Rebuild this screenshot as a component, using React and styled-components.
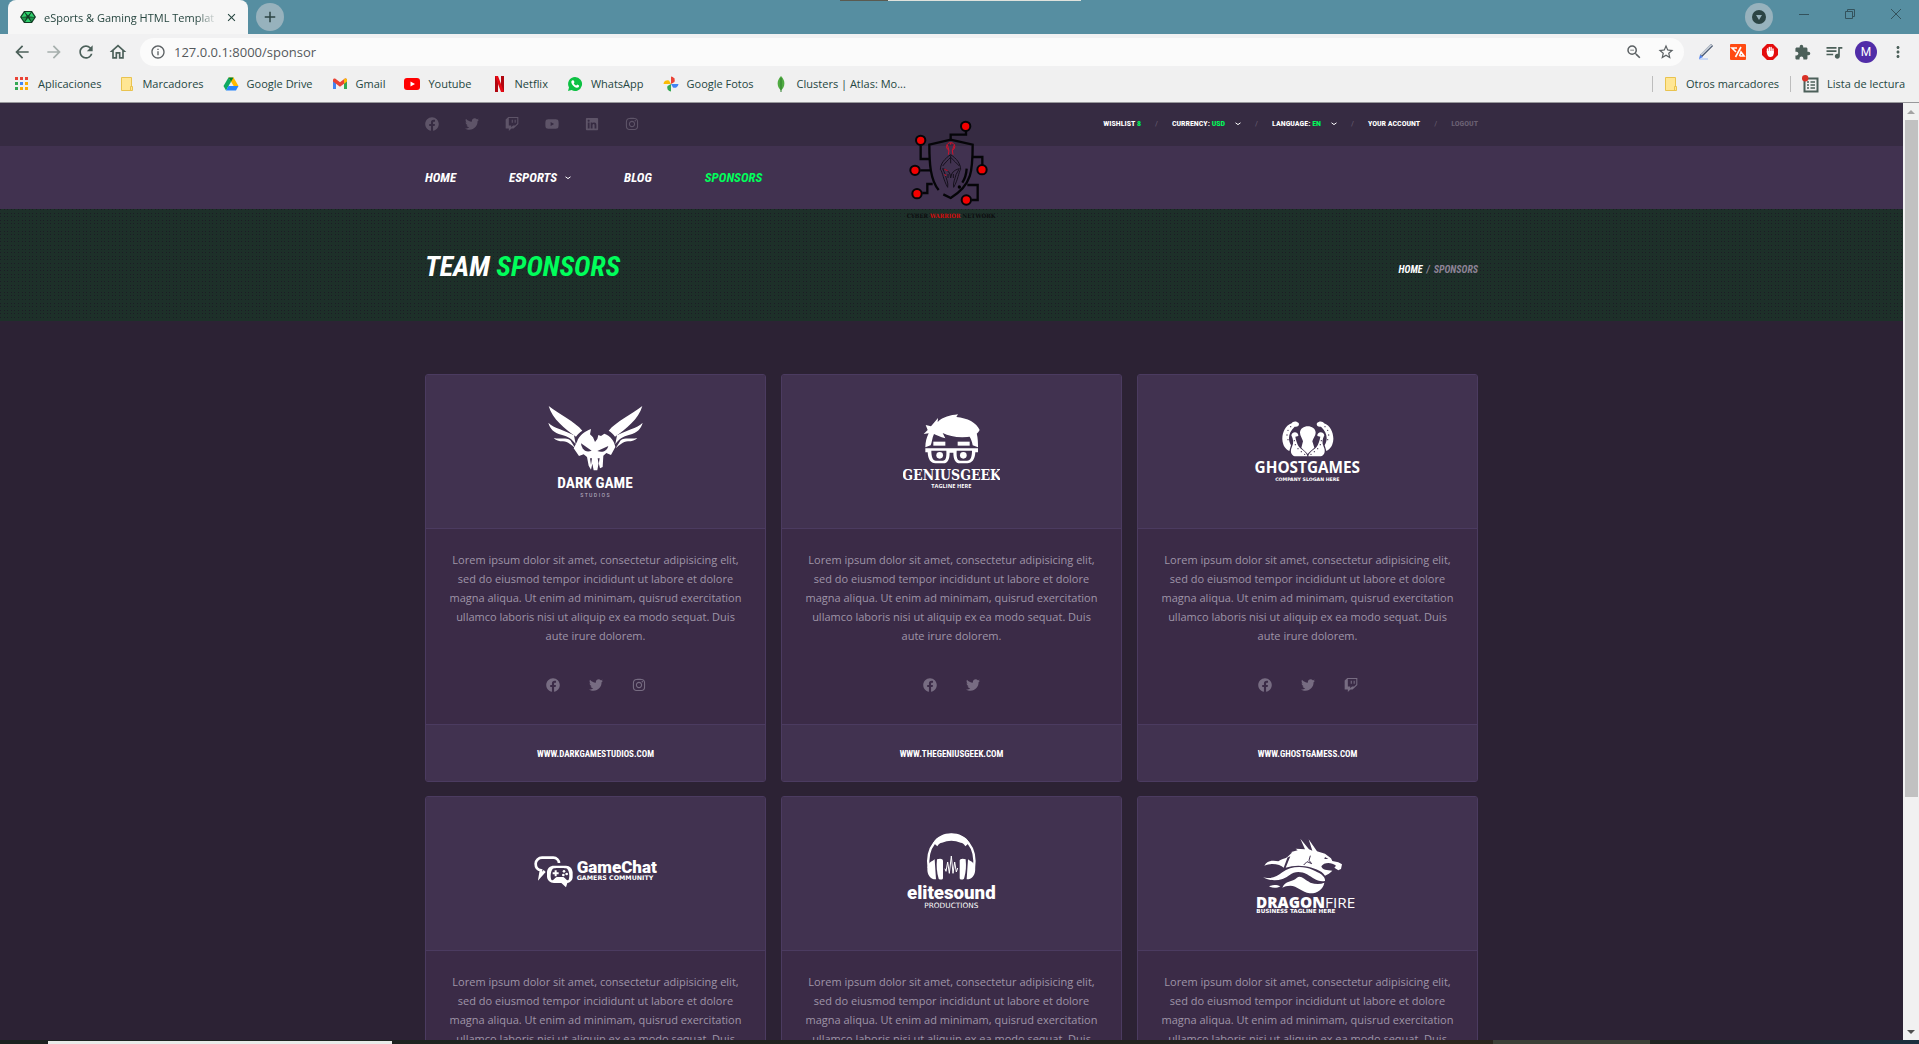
import React from 'react';
import styled, { createGlobalStyle } from 'styled-components';
import { FaFacebook, FaTwitter, FaTwitch, FaYoutube, FaLinkedin, FaInstagram } from 'react-icons/fa';
import { MdArrowBack, MdArrowForward, MdRefresh, MdOutlineHome, MdInfoOutline, MdZoomOut, MdStarBorder, MdExtension, MdQueueMusic, MdMoreVert, MdAdd, MdClose } from 'react-icons/md';

const condensed = '"Roboto Condensed", "Liberation Sans Narrow", Roboto, sans-serif';
const ui = '"Open Sans", "Noto Sans", sans-serif';

const GlobalStyle = createGlobalStyle`
  * { box-sizing: border-box; }
  body { margin: 0; background: #2c2234; font-family: ${ui}; }
  a { color: inherit; text-decoration: none; }
  button { border: 0; padding: 0; background: none; color: inherit; font: inherit; }
  svg { display: block; flex: none; }
`;

/* ---------- browser window ---------- */

const Window = styled.div`
  display: flex;
  flex-direction: column;
  height: 100vh;
  overflow: hidden;
`;

const TabStrip = styled.header`
  display: flex;
  align-items: center;
  height: 34px;
  flex: none;
  padding-left: 8px;
  background: linear-gradient(90deg, transparent 840px, #5a5a50 840px 888px, #dfe2dc 888px 1081px, transparent 1081px) top / 100% 1px no-repeat, #568ea1;
`;

const Tab = styled.div`
  display: flex;
  align-items: center;
  gap: 8px;
  width: 240px;
  height: 34px;
  padding: 0 10px 0 12px;
  border-radius: 8px 8px 0 0;
  background: #f6f6f6;
  color: #274640;
`;

const TabTitle = styled.span`
  flex: 1;
  overflow: hidden;
  white-space: nowrap;
  font-size: 11px;
  mask-image: linear-gradient(90deg, #000 88%, transparent);
`;

const RoundButton = styled.button`
  display: grid;
  place-items: center;
  width: 28px;
  height: 28px;
  margin: 0 8px;
  border-radius: 50%;
  background: #97b2bd;
  color: #2c4444;
`;

const WindowControls = styled.div`
  display: flex;
  align-items: center;
  margin-left: auto;
  color: #33525c;
`;

const WindowButton = styled.button`
  display: grid;
  place-items: center;
  width: 46px;
  height: 28px;
  padding-bottom: 6px;
`;

const Toolbar = styled.nav`
  display: flex;
  align-items: center;
  flex: none;
  height: 36px;
  padding: 4px 5px 4px 6px;
  background: #f1f1f2;
  color: #4c605a;
`;

const ToolButton = styled.button`
  display: grid;
  place-items: center;
  width: 32px;
  height: 28px;
  opacity: ${(p) => (p.$dim ? 0.45 : 1)};
`;

const AddressBar = styled.label`
  display: flex;
  align-items: center;
  flex: 1;
  height: 28px;
  margin: 0 6px;
  padding: 0 2px 0 10px;
  border-radius: 14px;
  background: #fbfbfb;
  color: #5b6063;
`;

const AddressInput = styled.input`
  flex: 1;
  min-width: 0;
  border: 0;
  padding: 0 8px;
  outline: 0;
  background: none;
  color: #54595c;
  font: 13px/20px ${ui};
`;

const Avatar = styled.span`
  display: grid;
  place-items: center;
  width: 22px;
  height: 22px;
  border-radius: 50%;
  background: #512da8;
  color: #fff;
  font: 12px Roboto, sans-serif;
`;

const Bookmarks = styled.nav`
  display: flex;
  align-items: center;
  justify-content: space-between;
  flex: none;
  height: 33px;
  padding: 0 14px 5px;
  border-bottom: 1px solid #98989b;
  background: #f0f0f0;
  color: #24463f;
  font-size: 11px;
`;

const BookmarkGroup = styled.div`
  display: flex;
  align-items: center;
  gap: ${(p) => p.$gap}px;
`;

const Bookmark = styled.a`
  display: flex;
  align-items: center;
  gap: 8px;
  white-space: nowrap;
`;

const Divider = styled.i`
  width: 1px;
  height: 16px;
  background: #bdbdbd;
`;

const Viewport = styled.div`
  display: flex;
  flex: 1;
  min-height: 0;
`;

const Page = styled.div`
  flex: 1;
  min-width: 0;
  overflow: hidden;
  background: #2c2234;
`;

const ScrollBar = styled.div`
  display: flex;
  flex-direction: column;
  flex: none;
  width: 16px;
  background: #f1f1f1;
`;

const ScrollArrow = styled.button`
  display: grid;
  place-items: center;
  height: 17px;
  color: ${(p) => (p.$dim ? '#a3a3a3' : '#505050')};
`;

const ScrollTrack = styled.div`
  flex: 1;
  padding: 0 1px 0 2px;
`;

const ScrollThumb = styled.div`
  height: 75%;
  background: #c1c1c1;
`;

const DesktopEdge = styled.div`
  flex: none;
  height: 4px;
  background:
    linear-gradient(90deg, transparent 48px, #e9ebe9 48px 392px, transparent 392px) bottom / 100% 3px no-repeat,
    linear-gradient(90deg, transparent 1493px, #3c4037 1493px 1650px, transparent 1650px),
    linear-gradient(90deg, #1b2220, #22231f 60%, #2c251c 75%, #1f2423 88%, #1b2f3f);
`;

/* ---------- site header ---------- */

const Container = styled.div`
  display: flex;
  align-items: center;
  width: 100%;
  max-width: 1053px;
  height: 100%;
  margin: 0 auto;
`;

const TopBar = styled.div`
  height: 43px;
  padding-bottom: 2px;
  background: #362b42;
`;

const Socials = styled.div`
  display: flex;
  align-items: center;
  gap: ${(p) => p.$gap}px;
  color: ${(p) => p.$color};
`;

const AccountMenu = styled.ul`
  display: flex;
  align-items: center;
  margin: 0 0 0 auto;
  padding: 0;
  list-style: none;
  color: #fff;
  font: 700 8px/12px ${condensed};

  li + li::before {
    content: '/';
    margin: 0 14px;
    color: #6a6073;
    font-weight: 400;
  }
`;

const MenuItem = styled.li`
  display: flex;
  align-items: center;
  color: ${(p) => (p.$muted ? '#6a6073' : '#fff')};
`;

const MenuButton = styled.button`
  display: flex;
  align-items: center;
  gap: 10px;
`;

const Accent = styled.span`
  color: #00ff5b;
`;

const Header = styled.header`
  position: relative;
`;

const MainNav = styled.nav`
  height: 63px;
  background: #413250;
`;

const NavList = styled.ul`
  display: flex;
  gap: 53px;
  margin: 0;
  padding: 0;
  list-style: none;
  color: #fff;
  font: italic 700 13px/16px ${condensed};
`;

const NavLink = styled.a`
  display: flex;
  align-items: center;
  gap: 8px;
  color: ${(p) => (p.$active ? '#00ff5b' : '#fff')};
`;

const BrandLink = styled.a`
  position: absolute;
  top: 17px;
  left: 50%;
  transform: translateX(-50%);
`;

const Banner = styled.section`
  height: 112px;
  padding-top: 3px;
  background:
    repeating-linear-gradient(180deg, transparent 0 1px, #1d3029 1px 4px, transparent 4px 5px, #1d3029 5px 7px, transparent 7px 8px, #1d3029 8px 11px, transparent 11px 12px, #1d3029 12px 14px, transparent 14px 15px, #1d3029 15px 18px),
    repeating-linear-gradient(90deg, transparent 0 1px, #1d3029 1px 4px, transparent 4px 5px, #1d3029 5px 7px, transparent 7px 8px, #1d3029 8px 11px, transparent 11px 12px, #1d3029 12px 14px, transparent 14px 15px, #1d3029 15px 18px),
    #1c1c25;
`;

const Title = styled.h1`
  margin: 0;
  color: #fff;
  font: italic 700 28px/36px ${condensed};
`;

const Crumbs = styled.nav`
  display: flex;
  gap: 4px;
  margin-left: auto;
  padding-top: 6px;
  color: #8d8396;
  font: italic 700 10px/12px ${condensed};
`;

const CrumbLink = styled.a`
  color: #fff;
`;

/* ---------- sponsors ---------- */

const Grid = styled.main`
  display: grid;
  grid-template-columns: repeat(3, 1fr);
  gap: 14px 15px;
  max-width: 1053px;
  margin: 0 auto;
  padding: 53px 0;
`;

const Card = styled.article`
  overflow: hidden;
  border: 1px solid #4b3b60;
  border-radius: 3px;
  background: #3b2b47;
`;

const CardLogo = styled.header`
  display: grid;
  place-items: center;
  height: 154px;
  border-bottom: 1px solid #4b3b60;
  background: #413250;
`;

const CardBody = styled.div`
  display: flex;
  flex-direction: column;
  align-items: center;
  gap: 33px;
  padding: 21px 21px 32px;
`;

const Blurb = styled.p`
  margin: 0;
  color: #9f95a7;
  text-align: center;
  font: 11px/19px "Open Sans", sans-serif;
`;

const CardFooter = styled.footer`
  display: grid;
  place-items: center;
  height: 57px;
  padding-top: 2px;
  border-top: 1px solid #4b3b60;
  background: #413250;
  color: #fff;
  font: 700 9px/12px ${condensed};
`;

/* ---------- drawings ---------- */

const Chevron = () => (
  <svg width="6" height="4" viewBox="0 0 6 4" fill="none" stroke="currentColor">
    <path d="M0.5 0.8L3 2.6L5.5 0.8" />
  </svg>
);

const Favicon = () => (
  <svg width="16" height="16" viewBox="0 0 16 16">
    <path d="M4 2h8l4 6-4 6H4L0 8z" fill="#123c25" />
    <path d="M5 3h6l-3 3.500zM1.500 8L4.500 3.500l2.300 4zM14.500 8l-3-4.500-2.300 4zM5 13L8 9l3 4z" fill="#2fd06c" />
    <path d="M6.500 8.500L4.500 12.500l-3-4zM9.500 8.500l2 4 3-4z" fill="#1f9a4d" />
  </svg>
);

const AppsIcon = () => (
  <svg width="16" height="16" viewBox="0 0 16 16">
    {['#ea4335', '#ea4335', '#ea4335', '#34a853', '#4285f4', '#fbab05', '#34a853', '#fbab05', '#fbab05'].map((c, i) => (
      <rect key={i} x={1 + (i % 3) * 5} y={1 + Math.floor(i / 3) * 5} width="3" height="3" fill={c} />
    ))}
  </svg>
);

const FolderIcon = () => (
  <svg width="14" height="16" viewBox="0 0 14 16">
    <path d="M1.500 1.500h10v9h1v4h-11z" fill="#ffe694" stroke="#e9c34f" />
    <path d="M10.500 14.500v-4h1.500" fill="none" stroke="#e9c34f" />
  </svg>
);

const DriveIcon = () => (
  <svg width="16" height="16" viewBox="0 0 16 16">
    <path d="M5.500 1.500h5L15.500 10h-4.800z" fill="#ffba00" />
    <path d="M5.500 1.500L8 5.800 3 14.500 0.500 10z" fill="#0da960" />
    <path d="M5.400 10h10.100L13 14.500H3z" fill="#2684fc" />
    <path d="M8 1.500h2.500L8 5.800 5.500 1.500z" fill="#00832d" />
  </svg>
);

const GmailIcon = () => (
  <svg width="16" height="16" viewBox="0 0 16 16">
    <path d="M1 4v9h3V7z" fill="#4285f4" />
    <path d="M15 4v9h-3V7z" fill="#34a853" />
    <path d="M1 4c0-1.500 1.500-2 2.500-1.200L8 6.300l4.500-3.500C13.500 2 15 2.500 15 4v1.500L8 10.800 1 5.500z" fill="#ea4335" />
    <path d="M12 3.200c1.200-1.200 3-.6 3 .8v1.500L12 7.800z" fill="#fbbc04" />
  </svg>
);

const YoutubeIcon = () => (
  <svg width="16" height="16" viewBox="0 0 16 16">
    <rect x="0" y="2" width="16" height="12" rx="3" fill="#f00" />
    <path d="M6.500 5.500v5L11 8z" fill="#fff" />
  </svg>
);

const NetflixIcon = () => (
  <svg width="16" height="16" viewBox="0 0 16 16">
    <path d="M4 0h3v16H4zM10 0h3v16h-3z" fill="#b1060f" />
    <path d="M4 0h3l6 16h-3z" fill="#e50914" />
  </svg>
);

const WhatsAppIcon = () => (
  <svg width="16" height="16" viewBox="0 0 16 16">
    <path d="M8 1a7 7 0 1 1-3.400 13.100L1 15l1-3.500A7 7 0 0 1 8 1z" fill="#0dc143" />
    <path d="M5.500 4.200l1.300.2.700 1.800-.8 1c.6 1.200 1.400 1.900 2.600 2.400l.9-1 1.900.9c.1 1.500-1 2.300-2.300 2.200C7 11.200 4.500 8.500 4.300 6c0-.8.5-1.500 1.200-1.800z" fill="#fff" />
  </svg>
);

const PhotosIcon = () => (
  <svg width="16" height="16" viewBox="0 0 16 16">
    <path d="M8 8V0.500a4 4 0 0 1 3.500 5.500L8 8z" fill="#ea4335" />
    <path d="M8 8h7.500a4 4 0 0 1-5.500 3.500z" fill="#4285f4" />
    <path d="M8 8v7.500A4 4 0 0 1 4.500 10z" fill="#34a853" />
    <path d="M8 8H0.500A4 4 0 0 1 6 4.500z" fill="#fbbc04" />
  </svg>
);

const LeafIcon = () => (
  <svg width="16" height="16" viewBox="0 0 16 16">
    <path d="M8 0c5 5 4 11 0 14.500C4 11 3 5 8 0z" fill="#4faa41" />
    <path d="M8 2v14" stroke="#2f7f2d" />
  </svg>
);

const ReadingListIcon = () => (
  <svg width="17" height="18" viewBox="0 0 17 18">
    <path d="M3 3.500h12.500v13H2.500V6" fill="none" stroke="#4c605a" strokeWidth="2" />
    <path d="M5 7h2M8.500 7H13M5 10h2M8.500 10H13M5 13h2M8.500 13H13" stroke="#4c605a" strokeWidth="1.500" />
    <circle cx="3.200" cy="3.200" r="3.200" fill="#d93025" />
  </svg>
);

const PenIcon = () => (
  <svg width="16" height="16" viewBox="0 0 16 16">
    <path d="M1 15h9" stroke="#c9d8f5" strokeWidth="2" />
    <path d="M3 12L14 1" stroke="#3c4c66" strokeWidth="3" />
    <path d="M3 11L13.500 0.800" stroke="#c5ccd6" strokeWidth="2" />
    <path d="M1 15l1-4 3 2z" fill="#4b7ff0" />
  </svg>
);

const OrangeIcon = () => (
  <svg width="16" height="16" viewBox="0 0 16 16">
    <rect width="16" height="16" rx="1" fill="#ff4a12" />
    <path d="M7 4H2l4 4M5.500 13L11 3M9.500 12H14l-3-4L9.500 12" fill="none" stroke="#fff" strokeWidth="1.600" />
  </svg>
);

const BlockIcon = () => (
  <svg width="16" height="16" viewBox="0 0 16 16">
    <path d="M5 0h6l5 5v6l-5 5H5l-5-5V5z" fill="#e40d0d" />
    <path d="M5.500 8V5M7.300 7V3.500M9.100 7V3.500M11 9V5" stroke="#fff" strokeWidth="1.400" strokeLinecap="round" />
    <path d="M4.800 7h6.900v2c0 3-1.500 4-3.500 4S5.500 11.500 4.800 9z" fill="#fff" />
  </svg>
);

const BrandLogo = () => (
  <svg width="92" height="100" viewBox="138 60 276 300">
    <g fill="none" stroke="#050508" strokeWidth="7">
      <path d="M236 270C211 240 208 190 208 134L272 119L338 134C338 210 337 255 272 294L250 283" />
      <path d="M272 119V104H318V90M182 137V177H209M181 211H211M187 279H202V252H218M338 171H367V195M322 255H353V300H335M320 206C319 222 315 236 307 248" />
    </g>
    <circle cx="298" cy="261" r="5" />
    {[[317, 79], [182, 121], [165, 211], [171, 281], [366, 209], [319, 300]].map(([x, y]) => (
      <circle key={x} cx={x} cy={y} r="14" fill="#f40000" stroke="#050508" strokeWidth="6" />
    ))}
    <path d="M265 164L267 152C254 142 260 128 272 128C284 128 290 142 277 152L279 164M267 152L262 134M277 152L283 134M272 129V134" fill="none" stroke="#d3122b" strokeWidth="3" />
    <g fill="none" stroke="#15101c" strokeWidth="3">
      <path d="M272 164C254 176 242 190 241 208C248 216 250 240 263 262C266 248 258 236 256 224L248 206C256 208 266 212 270 222L272 234L275 222C280 212 290 208 298 206L288 224C286 236 278 248 281 262C294 240 296 216 302 208C301 190 290 176 272 164Z" />
      <path d="M272 166V190M272 172C262 182 254 190 248 198M272 172C282 182 290 190 298 198M264 234V222M280 234V222" />
    </g>
    <path d="M253 208L263 212M254 222L258 228" stroke="#d3122b" strokeWidth="3" />
    <text x="273" y="354" textAnchor="middle" fontFamily='"DejaVu Serif Condensed", "DejaVu Serif", serif' fontWeight="700" fontSize="18" fill="#0c0d0f">
      CYBER <tspan fill="#d80a0a">WARRIOR</tspan> NETWORK
    </text>
  </svg>
);

const INK = '#413250';

const DarkWing = () => (
  <>
    <path d="M387 123C418 148 466 170 488 197C480 202 474 208 469 215C436 192 398 162 387 123Z" />
    <path d="M386 173C402 190 438 196 463 211L468 238C458 222 446 214 425 209C403 203 391 192 386 173Z" />
    <path d="M402 219C420 224 438 216 452 226L467 250C455 240 446 230 430 229C418 229 408 226 402 219Z" />
  </>
);

const DarkGameLogo = () => (
  <svg width="95" height="93" viewBox="385 120 285 279" fill="#fff">
    <DarkWing />
    <g transform="translate(1055 0) scale(-1 1)"><DarkWing /></g>
    <path d="M472 230C478 212 494 200 514 192L511 208L520 217L526 231L533 222L536 210L544 213L554 206C574 214 584 228 587 246L574 270L560 264L551 272L549 306L541 310L537 294L533 316H522L518 296L514 314L507 302L502 276L492 268L478 273L462 250Z" />
    <g fill={INK}>
      <path d="M484 235L516 257C500 264 487 256 484 235Z" />
      <path d="M566 243L533 258C548 264 562 258 566 243Z" />
      <path d="M511 280L514 300L517 280ZM534 280L537 298L540 280Z" />
    </g>
    <text x="526" y="370" textAnchor="middle" fontFamily={condensed} fontWeight="700" fontSize="46">DARK GAME</text>
    <text x="526" y="395" textAnchor="middle" fontFamily={condensed} fontSize="18" fill="#b9b1c2">S T U D I O S</text>
  </svg>
);

const GeniusLogo = () => (
  <svg width="97" height="75" viewBox="369 146 291 225" fill="#fff">
    <path d="M431 206L443 194L437 179L453 183L474 158L473 170C490 154 510 150 534 147L529 155C562 158 590 172 599 194C594 204 585 209 578 213C540 219 510 214 488 203L496 219C480 214 470 210 462 206C456 218 456 232 452 240L436 246C436 230 440 216 446 204Z" />
    <path d="M568 213L590 204C594 220 594 234 594 246L578 240C576 230 574 222 568 213Z" />
    <rect x="460" y="229" width="36" height="12" />
    <rect x="533" y="229" width="36" height="12" />
    <path d="M436 249H594V261H586C585 282 576 294 562 294H540C526 294 520 282 520 262H509C509 282 503 294 490 294H466C452 294 444 282 443 261H436Z" />
    <path d="M454 256H499C500 274 498 286 488 286H468C458 286 454 274 454 256ZM530 256H576C576 274 572 286 561 286H541C531 286 529 274 530 256Z" fill={INK} />
    <circle cx="479" cy="270" r="10" />
    <circle cx="550" cy="270" r="10" />
    <text x="515" y="345" textAnchor="middle" fontFamily='"DejaVu Serif Condensed", "DejaVu Serif", serif' fontWeight="700" fontSize="42">GENIUSGEEK</text>
    <text x="514" y="369" textAnchor="middle" fontFamily='"Open Sans", sans-serif' fontWeight="700" fontSize="17">TAGLINE HERE</text>
  </svg>
);

const Tentacles = () => (
  <>
    <path d="M506 173C500 166 488 167 485 174C466 180 456 204 457 222C458 240 466 252 478 257L483 240C472 222 476 200 494 184C504 186 509 180 506 173Z" />
    <path d="M484 210C486 197 506 198 505 212L496 214C498 226 502 238 508 246C518 256 531 262 532 273H494C482 268 480 256 486 244C492 232 490 222 484 210Z" />
    <g fill={INK}>
      <circle cx="482" cy="184" r="2" /><circle cx="474" cy="195" r="2" /><circle cx="471" cy="209" r="2" /><circle cx="474" cy="223" r="2" />
      <circle cx="493" cy="226" r="2" /><circle cx="496" cy="238" r="2" /><circle cx="504" cy="250" r="2" /><circle cx="514" cy="259" r="2" /><circle cx="524" cy="267" r="2" />
    </g>
  </>
);

const GhostLogo = () => (
  <svg width="107" height="61" viewBox="372 167 321 183" fill="#fff">
    <Tentacles />
    <g transform="translate(1067 0) scale(-1 1)"><Tentacles /></g>
    <path d="M510 202C510 176 557 176 557 202C557 212 549 218 547 228L553 247C545 254 538 260 533 266C528 260 521 254 514 247L519 228C517 218 510 212 510 202Z" />
    <text x="532" y="323" textAnchor="middle" fontFamily='"Open Sans", sans-serif' fontWeight="700" fontSize="46">GHOSTGAMES</text>
    <text x="532" y="348" textAnchor="middle" fontFamily='"DejaVu Sans", sans-serif' fontWeight="700" fontSize="14">COMPANY SLOGAN HERE</text>
  </svg>
);

const GameChatLogo = () => (
  <svg width="124" height="35" viewBox="340 227 372 105" fill="#fff">
    <path d="M372 272L358 288L361 270C350 268 345 260 345 250C345 240 354 232 364 232H398C408 232 415 240 415 248" fill="none" stroke="#fff" strokeWidth="8" />
    <path d="M400 256H436C448 256 456 266 456 276V290C456 298 450 306 440 308L436 321L422 308H400C388 308 379 300 379 288V276C379 264 388 256 400 256Z" />
    <path d="M400 264C390 266 388 290 392 298C398 304 402 292 408 290H428C434 292 438 304 444 298C448 290 446 266 436 264C430 263 406 263 400 264Z" fill={INK} />
    <path d="M402 270H408V276H414V282H408V288H402V282H396V276H402Z" />
    <circle cx="430" cy="273" r="4" /><circle cx="438" cy="281" r="4" /><circle cx="428" cy="284" r="4" />
    <text x="468" y="277" fontFamily="Roboto, sans-serif" fontWeight="900" fontSize="51">GameChat</text>
    <text x="468" y="299" fontFamily='"DejaVu Sans", sans-serif' fontWeight="700" fontSize="19">GAMERS COMMUNITY</text>
  </svg>
);

const EarCup = () => (
  <>
    <path d="M1538 240C1512 250 1520 298 1548 296L1544 236Z" />
    <path d="M1551 236C1560 232 1569 234 1569 240V292C1569 298 1560 298 1556 294C1550 274 1549 256 1551 236Z" />
  </>
);

const EliteLogo = () => (
  <svg width="89" height="82" viewBox="1461 157 267 246" fill="#fff">
    <path d="M1526 262C1508 130 1680 130 1662 262" fill="none" stroke="#fff" strokeWidth="7" />
    <path d="M1540 186C1560 148 1628 148 1648 186L1636 197C1632 190 1628 186 1622 186C1604 178 1584 178 1566 186C1560 186 1556 190 1552 197Z" />
    <EarCup />
    <g transform="translate(3188 0) scale(-1 1)"><EarCup /></g>
    <path d="M1575 264L1578 272L1583 244L1588 278L1594 226L1599 278L1604 244L1609 274L1613 262" fill="none" stroke="#fff" strokeWidth="3" />
    <text x="1594" y="354" textAnchor="middle" fontFamily="Roboto, sans-serif" fontWeight="900" fontSize="56">elitesound</text>
    <text x="1594" y="383" textAnchor="middle" fontFamily='"DejaVu Sans", sans-serif' fontSize="22">PRODUCTIONS</text>
  </svg>
);

const DragonLogo = () => (
  <svg width="103" height="80" viewBox="377 161 309 240" fill="#fff">
    <path d="M402 256C412 238 432 240 444 243C452 236 462 236 472 230L460 262C450 252 424 246 402 256Z" />
    <path d="M466 262L480 228L468 233L486 216L480 216L502 210L496 205L524 207L510 175L536 207L546 211L535 177L560 213L584 220L602 234L606 242L624 246L635 252L632 266L624 270L612 262L617 256C602 244 580 246 573 258C576 270 590 270 606 271C600 278 592 282 584 286C574 270 548 262 524 258C506 254 484 256 466 262Z" />
    <path d="M396 289C420 300 440 288 456 276C480 256 520 256 546 268C570 278 586 288 584 302C560 306 548 292 530 282C512 272 492 272 478 284C456 302 420 306 396 289Z" />
    <path d="M456 322C464 300 486 306 500 292C512 284 522 298 540 307C556 312 570 312 582 307C578 328 560 340 538 339C516 336 500 316 480 316C470 316 462 318 456 322Z" />
    <path d="M416 318C430 312 440 314 450 318C440 324 426 324 416 318Z" />
    <path d="M540 226L536 240L544 250L530 244L520 254" fill="none" stroke={INK} strokeWidth="3" />
    <path d="M584 230L594 236L582 236Z" fill={INK} />
    <text x="377" y="382" fontFamily='"Open Sans", sans-serif' fontWeight="800" fontSize="46">
      DRAGON<tspan fontWeight="400">FIRE</tspan>
    </text>
    <text x="378" y="399" fontFamily='"DejaVu Sans", sans-serif' fontWeight="700" fontSize="17">BUSINESS TAGLINE HERE</text>
  </svg>
);

/* ---------- data ---------- */

const bookmarks = [
  ['Aplicaciones', AppsIcon],
  ['Marcadores', FolderIcon],
  ['Google Drive', DriveIcon],
  ['Gmail', GmailIcon],
  ['Youtube', YoutubeIcon],
  ['Netflix', NetflixIcon],
  ['WhatsApp', WhatsAppIcon],
  ['Google Fotos', PhotosIcon],
  ['Clusters | Atlas: Mo...', LeafIcon],
];

const blurb =
  'Lorem ipsum dolor sit amet, consectetur adipisicing elit, sed do eiusmod tempor incididunt ut labore et dolore magna aliqua. Ut enim ad minimam, quisrud exercitation ullamco laboris nisi ut aliquip ex ea modo sequat. Duis aute irure dolorem.';

const sponsors = [
  { logo: DarkGameLogo, site: 'WWW.DARKGAMESTUDIOS.COM', socials: [FaFacebook, FaTwitter, FaInstagram] },
  { logo: GeniusLogo, site: 'WWW.THEGENIUSGEEK.COM', socials: [FaFacebook, FaTwitter] },
  { logo: GhostLogo, site: 'WWW.GHOSTGAMESS.COM', socials: [FaFacebook, FaTwitter, FaTwitch] },
  { logo: GameChatLogo, site: 'WWW.GAMECHAT.COM', socials: [FaFacebook, FaTwitter] },
  { logo: EliteLogo, site: 'WWW.ELITESOUND.COM', socials: [FaFacebook, FaTwitter] },
  { logo: DragonLogo, site: 'WWW.DRAGONFIRE.COM', socials: [FaFacebook, FaTwitter] },
];

const SocialLinks = ({ icons, gap, color }) => (
  <Socials $gap={gap} $color={color}>
    {icons.map((Icon, i) => (
      <a href="#social" key={i}><Icon size={14} /></a>
    ))}
  </Socials>
);

const BrowserChrome = () => (
  <>
    <TabStrip>
      <Tab>
        <Favicon />
        <TabTitle>eSports &amp; Gaming HTML Templat</TabTitle>
        <button aria-label="Close tab"><MdClose size={13} /></button>
      </Tab>
      <RoundButton aria-label="New tab"><MdAdd size={18} /></RoundButton>
      <WindowControls>
        <RoundButton aria-label="Search tabs">
          <svg width="14" height="14" viewBox="0 0 14 14"><circle cx="7" cy="7" r="7" fill="#2c4444" /><path d="M4 5h6L7 10z" fill="#97b2bd" /></svg>
        </RoundButton>
        <WindowButton aria-label="Minimise"><svg width="10" height="10" stroke="currentColor"><path d="M0 5.500h10" /></svg></WindowButton>
        <WindowButton aria-label="Restore"><svg width="10" height="10" fill="none" stroke="currentColor"><path d="M.5 2.500h7v7h-7zM2.500 2.500v-2h7v7h-2" /></svg></WindowButton>
        <WindowButton aria-label="Close"><svg width="10" height="10" stroke="currentColor"><path d="M0 0l10 10M10 0L0 10" /></svg></WindowButton>
      </WindowControls>
    </TabStrip>
    <Toolbar>
      <ToolButton aria-label="Back"><MdArrowBack size={20} /></ToolButton>
      <ToolButton aria-label="Forward" $dim><MdArrowForward size={20} /></ToolButton>
      <ToolButton aria-label="Reload"><MdRefresh size={20} /></ToolButton>
      <ToolButton aria-label="Home"><MdOutlineHome size={20} /></ToolButton>
      <AddressBar>
        <MdInfoOutline size={16} />
        <AddressInput aria-label="Address" defaultValue="127.0.0.1:8000/sponsor" />
        <ToolButton aria-label="Zoom"><MdZoomOut size={18} /></ToolButton>
        <ToolButton aria-label="Add bookmark"><MdStarBorder size={18} /></ToolButton>
      </AddressBar>
      <ToolButton aria-label="Pen"><PenIcon /></ToolButton>
      <ToolButton aria-label="Extension"><OrangeIcon /></ToolButton>
      <ToolButton aria-label="Blocker"><BlockIcon /></ToolButton>
      <ToolButton aria-label="Extensions"><MdExtension size={17} /></ToolButton>
      <ToolButton aria-label="Media"><MdQueueMusic size={20} /></ToolButton>
      <ToolButton aria-label="Profile"><Avatar>M</Avatar></ToolButton>
      <ToolButton aria-label="Menu"><MdMoreVert size={18} /></ToolButton>
    </Toolbar>
    <Bookmarks>
      <BookmarkGroup $gap={19}>
        {bookmarks.map(([label, Icon]) => (
          <Bookmark href="#bookmark" key={label}><Icon />{label}</Bookmark>
        ))}
      </BookmarkGroup>
      <BookmarkGroup $gap={11}>
        <Divider />
        <Bookmark href="#bookmark"><FolderIcon />Otros marcadores</Bookmark>
        <Divider />
        <Bookmark href="#bookmark"><ReadingListIcon />Lista de lectura</Bookmark>
      </BookmarkGroup>
    </Bookmarks>
  </>
);

const SiteHeader = () => (
  <Header>
    <TopBar>
      <Container>
        <SocialLinks icons={[FaFacebook, FaTwitter, FaTwitch, FaYoutube, FaLinkedin, FaInstagram]} gap={26} color="#5e5468" />
        <AccountMenu>
          <MenuItem><a href="#wishlist">WISHLIST <Accent>8</Accent></a></MenuItem>
          <MenuItem><MenuButton><span>CURRENCY: <Accent>USD</Accent></span><Chevron /></MenuButton></MenuItem>
          <MenuItem><MenuButton><span>LANGUAGE: <Accent>EN</Accent></span><Chevron /></MenuButton></MenuItem>
          <MenuItem><a href="#account">YOUR ACCOUNT</a></MenuItem>
          <MenuItem $muted><a href="#logout">LOGOUT</a></MenuItem>
        </AccountMenu>
      </Container>
    </TopBar>
    <MainNav>
      <Container>
        <NavList>
          <li><NavLink href="#home">HOME</NavLink></li>
          <li><NavLink href="#esports">ESPORTS <Chevron /></NavLink></li>
          <li><NavLink href="#blog">BLOG</NavLink></li>
          <li><NavLink href="#sponsors" $active>SPONSORS</NavLink></li>
        </NavList>
      </Container>
    </MainNav>
    <BrandLink href="#home" aria-label="Cyber Warrior Network"><BrandLogo /></BrandLink>
  </Header>
);

export default function App() {
  return (
    <Window>
      <GlobalStyle />
      <BrowserChrome />
      <Viewport>
        <Page>
          <SiteHeader />
          <Banner>
            <Container>
              <Title>TEAM <Accent>SPONSORS</Accent></Title>
              <Crumbs>
                <CrumbLink href="#home">HOME</CrumbLink>
                <span>/</span>
                <span>SPONSORS</span>
              </Crumbs>
            </Container>
          </Banner>
          <Grid>
            {sponsors.map(({ logo: Logo, site, socials }) => (
              <Card key={site}>
                <CardLogo><Logo /></CardLogo>
                <CardBody>
                  <Blurb>{blurb}</Blurb>
                  <SocialLinks icons={socials} gap={29} color="#776c82" />
                </CardBody>
                <CardFooter><a href="#site">{site}</a></CardFooter>
              </Card>
            ))}
          </Grid>
        </Page>
        <ScrollBar>
          <ScrollArrow aria-label="Scroll up" $dim><svg width="8" height="4"><path d="M0 4L4 0L8 4z" fill="currentColor" /></svg></ScrollArrow>
          <ScrollTrack><ScrollThumb /></ScrollTrack>
          <ScrollArrow aria-label="Scroll down"><svg width="8" height="4"><path d="M0 0L4 4L8 0z" fill="currentColor" /></svg></ScrollArrow>
        </ScrollBar>
      </Viewport>
      <DesktopEdge />
    </Window>
  );
}
